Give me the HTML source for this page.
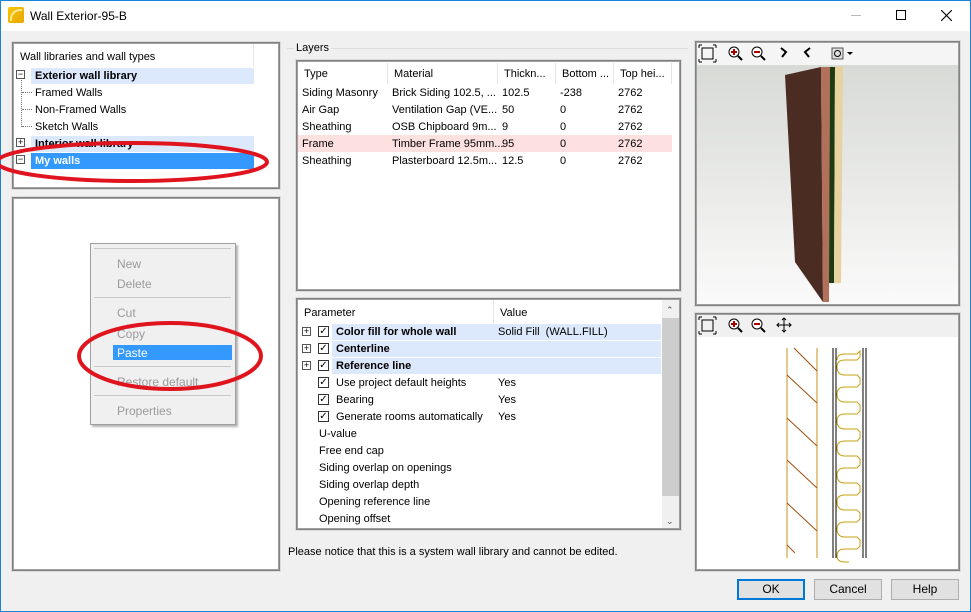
<!DOCTYPE html>
<html><head><meta charset="utf-8"><style>
*{margin:0;padding:0;box-sizing:border-box}
body{width:971px;height:612px;overflow:hidden;background:#f0f0f0;font-family:"Liberation Sans",sans-serif;font-size:11px;color:#000;position:relative}
.a{position:absolute}
.t{position:absolute;white-space:nowrap;line-height:13px;margin-top:1px}
.box{position:absolute;background:#fff;border:1px solid #828282;box-shadow:0 0 0 1px #dcdcdc, inset 0 0 0 1px #a0a0a0}
.b{font-weight:bold}
.hb{position:absolute;background:#dce8fb}
.cb{position:absolute;width:11px;height:11px;border:1px solid #333;background:#fff;font-size:10px;line-height:9px;text-align:center}
.pm{position:absolute;width:9px;height:9px;border:1px solid #555;background:#fff;font-size:9px;line-height:7px;text-align:center}
.btn{position:absolute;height:21px;width:68px;border:1px solid #adadad;background:#e1e1e1;text-align:center;line-height:19px;font-size:12px}
.mi{position:absolute;left:117px;color:#9a9a9a;font-size:12px}
.sep{position:absolute;left:94px;width:137px;height:1px;background:#c8c8c8}
.vd{position:absolute;width:1px;background:#e5e5e5}
</style></head><body>
<div class="a" style="left:0;top:0;width:971px;height:31px;background:#fff"></div>
<div class="a" style="left:0;top:0;width:1px;height:612px;background:#1883d7"></div>
<div class="a" style="left:970px;top:0;width:1px;height:612px;background:#1883d7"></div>
<div class="a" style="left:0;top:0;width:971px;height:1px;background:#1883d7"></div>
<div class="a" style="left:0;top:611px;width:971px;height:1px;background:#1883d7"></div>
<div class="a" style="left:8px;top:7px;width:16px;height:16px;background:linear-gradient(135deg,#f7c400,#e8a800);border-radius:2px"></div>
<div class="a" style="left:10px;top:9px;width:12px;height:12px;border-top:2px solid #fff6c0;border-left:2px solid #fff6c0;border-radius:10px 0 0 0;opacity:.8"></div>
<div class="t" style="left:30px;top:8px;font-size:12px;line-height:14px">Wall Exterior-95-B</div>
<div class="a" style="left:851px;top:15px;width:10px;height:1px;background:#bbb"></div>
<div class="a" style="left:896px;top:10px;width:10px;height:10px;border:1px solid #000"></div>
<svg class="a" style="left:941px;top:10px" width="11" height="11"><path d="M0 0L11 11M11 0L0 11" stroke="#000" stroke-width="1.1"/></svg>

<div class="box" style="left:12px;top:42px;width:268px;height:147px"></div>
<div class="vd" style="left:253px;top:44px;height:22px"></div>
<div class="t" style="left:20px;top:50px">Wall libraries and wall types</div>
<div class="hb" style="left:31px;top:68px;width:223px;height:16px"></div>
<div class="pm" style="left:16px;top:70px">−</div>
<div class="t b" style="left:35px;top:69px">Exterior wall library</div>
<div class="a" style="left:21px;top:80px;width:1px;height:47px;border-left:1px dotted #777"></div>
<div class="a" style="left:22px;top:92px;width:10px;border-top:1px dotted #777"></div>
<div class="a" style="left:22px;top:109px;width:10px;border-top:1px dotted #777"></div>
<div class="a" style="left:22px;top:126px;width:10px;border-top:1px dotted #777"></div>
<div class="t" style="left:35px;top:86px">Framed Walls</div>
<div class="t" style="left:35px;top:103px">Non-Framed Walls</div>
<div class="t" style="left:35px;top:120px">Sketch Walls</div>
<div class="hb" style="left:31px;top:136px;width:223px;height:16px"></div>
<div class="pm" style="left:16px;top:138px">+</div>
<div class="t b" style="left:35px;top:137px">Interior wall library</div>
<div class="a" style="left:31px;top:153px;width:223px;height:16px;background:#3399ff"></div>
<div class="pm" style="left:16px;top:155px">−</div>
<div class="t b" style="left:35px;top:154px;color:#fff">My walls</div>

<div class="box" style="left:12px;top:197px;width:268px;height:374px"></div>
<div class="a" style="left:90px;top:243px;width:146px;height:182px;background:#f0f0f0;border:1px solid #a0a0a0;box-shadow:2px 2px 2px rgba(0,0,0,.3)"></div>
<div class="sep" style="top:248px"></div>
<div class="mi t" style="top:257px">New</div>
<div class="mi t" style="top:277px">Delete</div>
<div class="sep" style="top:297px"></div>
<div class="mi t" style="top:306px">Cut</div>
<div class="mi t" style="top:327px">Copy</div>
<div class="a" style="left:113px;top:345px;width:119px;height:15px;background:#3399ff"></div>
<div class="mi t" style="top:346px;color:#fff">Paste</div>
<div class="sep" style="top:366px"></div>
<div class="mi t" style="top:375px">Restore default</div>
<div class="sep" style="top:395px"></div>
<div class="mi t" style="top:404px">Properties</div>

<div class="a" style="left:287px;top:48px;width:401px;height:1px;background:#dcdcdc"></div>
<div class="t" style="left:294px;top:41px;background:#f0f0f0;padding:0 2px 0 2px">Layers</div>
<div class="box" style="left:296px;top:60px;width:385px;height:231px"></div>
<div class="vd" style="left:387px;top:63px;height:21px"></div>
<div class="vd" style="left:497px;top:63px;height:21px"></div>
<div class="vd" style="left:555px;top:63px;height:21px"></div>
<div class="vd" style="left:613px;top:63px;height:21px"></div>
<div class="vd" style="left:671px;top:63px;height:21px"></div>
<div class="t" style="left:304px;top:67px">Type</div>
<div class="t" style="left:394px;top:67px">Material</div>
<div class="t" style="left:504px;top:67px">Thickn...</div>
<div class="t" style="left:562px;top:67px">Bottom ...</div>
<div class="t" style="left:620px;top:67px">Top hei...</div>
<div class="a" style="left:298px;top:135px;width:374px;height:17px;background:#fde0e0"></div>
<div class="t" style="left:302px;top:86px">Siding Masonry</div><div class="t" style="left:392px;top:86px">Brick Siding 102.5, ...</div><div class="t" style="left:502px;top:86px">102.5</div><div class="t" style="left:560px;top:86px">-238</div><div class="t" style="left:618px;top:86px">2762</div>
<div class="t" style="left:302px;top:103px">Air Gap</div><div class="t" style="left:392px;top:103px">Ventilation Gap (VE...</div><div class="t" style="left:502px;top:103px">50</div><div class="t" style="left:560px;top:103px">0</div><div class="t" style="left:618px;top:103px">2762</div>
<div class="t" style="left:302px;top:120px">Sheathing</div><div class="t" style="left:392px;top:120px">OSB Chipboard 9m...</div><div class="t" style="left:502px;top:120px">9</div><div class="t" style="left:560px;top:120px">0</div><div class="t" style="left:618px;top:120px">2762</div>
<div class="t" style="left:302px;top:137px">Frame</div><div class="t" style="left:392px;top:137px">Timber Frame 95mm...</div><div class="t" style="left:502px;top:137px">95</div><div class="t" style="left:560px;top:137px">0</div><div class="t" style="left:618px;top:137px">2762</div>
<div class="t" style="left:302px;top:154px">Sheathing</div><div class="t" style="left:392px;top:154px">Plasterboard 12.5m...</div><div class="t" style="left:502px;top:154px">12.5</div><div class="t" style="left:560px;top:154px">0</div><div class="t" style="left:618px;top:154px">2762</div>

<div class="box" style="left:296px;top:298px;width:385px;height:232px"></div>
<div class="vd" style="left:493px;top:300px;height:23px"></div>
<div class="t" style="left:304px;top:306px">Parameter</div>
<div class="t" style="left:500px;top:306px">Value</div>
<div class="a" style="left:662px;top:300px;width:17px;height:228px;background:#f0f0f0"></div>
<div class="a" style="left:662px;top:318px;width:17px;height:178px;background:#cdcdcd"></div>
<div class="t" style="left:666px;top:303px;font-size:9px;color:#555">&#8963;</div>
<div class="t" style="left:666px;top:514px;font-size:9px;color:#555">&#8964;</div>
<div class="hb" style="left:332px;top:324px;width:329px;height:16px"></div>
<div class="hb" style="left:332px;top:341px;width:329px;height:16px"></div>
<div class="hb" style="left:332px;top:358px;width:329px;height:16px"></div>
<div class="pm" style="left:302px;top:327px">+</div><div class="pm" style="left:302px;top:344px">+</div><div class="pm" style="left:302px;top:361px">+</div>
<div class="cb" style="left:318px;top:326px">✓</div><div class="cb" style="left:318px;top:343px">✓</div><div class="cb" style="left:318px;top:360px">✓</div>
<div class="cb" style="left:318px;top:377px">✓</div><div class="cb" style="left:318px;top:394px">✓</div><div class="cb" style="left:318px;top:411px">✓</div>
<div class="t b" style="left:336px;top:325px">Color fill for whole wall</div><div class="t" style="left:498px;top:325px">Solid Fill&nbsp; (WALL.FILL)</div>
<div class="t b" style="left:336px;top:342px">Centerline</div>
<div class="t b" style="left:336px;top:359px">Reference line</div>
<div class="t" style="left:336px;top:376px">Use project default heights</div><div class="t" style="left:498px;top:376px">Yes</div>
<div class="t" style="left:336px;top:393px">Bearing</div><div class="t" style="left:498px;top:393px">Yes</div>
<div class="t" style="left:336px;top:410px">Generate rooms automatically</div><div class="t" style="left:498px;top:410px">Yes</div>
<div class="t" style="left:319px;top:427px">U-value</div>
<div class="t" style="left:319px;top:444px">Free end cap</div>
<div class="t" style="left:319px;top:461px">Siding overlap on openings</div>
<div class="t" style="left:319px;top:478px">Siding overlap depth</div>
<div class="t" style="left:319px;top:495px">Opening reference line</div>
<div class="t" style="left:319px;top:512px">Opening offset</div>
<div class="t" style="left:288px;top:545px">Please notice that this is a system wall library and cannot be edited.</div>

<div class="box" style="left:695px;top:41px;width:265px;height:265px"></div>
<div class="a" style="left:697px;top:43px;width:261px;height:22px;background:#f5f5f5"></div>
<div class="a" style="left:697px;top:65px;width:261px;height:239px;background:linear-gradient(#d8dad6,#fafafa)"></div>
<svg class="a" style="left:697px;top:43px" width="160" height="22">
<rect x="5" y="5" width="11" height="11" fill="none" stroke="#000"/><path d="M2 2h3M2 2v3M19 2h-3M19 2v3M2 19h3M2 19v-3M19 19h-3M19 19v-3" stroke="#000"/>
<circle cx="37" cy="9" r="5" fill="#fff" stroke="#000"/><path d="M34 9h6M37 6v6" stroke="#a00" stroke-width="2"/><path d="M41 13l4 4" stroke="#000" stroke-width="2"/>
<circle cx="60" cy="9" r="5" fill="#fff" stroke="#000"/><path d="M57 9h6" stroke="#a00" stroke-width="2"/><path d="M64 13l4 4" stroke="#000" stroke-width="2"/>
<path d="M84 5l5 4-4 5" fill="none" stroke="#000" stroke-width="2"/><path d="M113 5l-5 4 4 5" fill="none" stroke="#000" stroke-width="2"/>
<rect x="135" y="5" width="11" height="11" fill="#ddd" stroke="#555"/><circle cx="140.5" cy="10.5" r="3" fill="none" stroke="#000"/>
<path d="M150 9h6l-3 3z" fill="#000"/></svg>
<svg class="a" style="left:697px;top:65px" width="261" height="239">
<polygon points="88,10 124,2 126,237 98,197" fill="#4a2c22"/>
<polygon points="124,2 133,2 132,237 126,237" fill="#b0705a"/>
<polygon points="133,2 138,2 137,218 132,218" fill="#1e3a10"/>
<polygon points="138,2 146,1 144,218 137,218" fill="#e8d2a0"/>
</svg>

<div class="box" style="left:695px;top:313px;width:265px;height:258px"></div>
<div class="a" style="left:697px;top:315px;width:261px;height:22px;background:#f0f0f0"></div>
<svg class="a" style="left:697px;top:315px" width="110" height="22">
<rect x="5" y="5" width="11" height="11" fill="none" stroke="#000"/><path d="M2 2h3M2 2v3M19 2h-3M19 2v3M2 19h3M2 19v-3M19 19h-3M19 19v-3" stroke="#000"/>
<circle cx="37" cy="9" r="5" fill="#fff" stroke="#000"/><path d="M34 9h6M37 6v6" stroke="#a00" stroke-width="2"/><path d="M41 13l4 4" stroke="#000" stroke-width="2"/>
<circle cx="60" cy="9" r="5" fill="#fff" stroke="#000"/><path d="M57 9h6" stroke="#a00" stroke-width="2"/><path d="M64 13l4 4" stroke="#000" stroke-width="2"/>
<path d="M87 3v14M80 10h14M85 5l2-2 2 2M85 15l2 2 2-2M82 8l-2 2 2 2M92 8l2 2-2 2" fill="none" stroke="#000"/></svg>
<svg class="a" style="left:697px;top:338px" width="261" height="230">
<path d="M90 10v210M120 10v210" stroke="#c89020"/>
<path d="M97 10l23 23M90 37l30 28M90 80l30 28M90 122l30 28M90 165l30 28M90 207l8 8" stroke="#a05010"/>
<path d="M136 10v210M139 10v210M166 10v210M169 10v210" stroke="#000"/>
<path d="M140 22q0 -6 8 -6h12l3 -3v6l-3 3h-12q-8 0-8 7q0 8 8 8h12l3 3v6l-3 3h-12q-8 0-8 7q0 8 8 8h12l3 3v6l-3 3h-12q-8 0-8 7q0 8 8 8h12l3 3v6l-3 3h-12q-8 0-8 7q0 8 8 8h12l3 3v6l-3 3h-12q-8 0-8 7q0 8 8 8h12l3 3v6l-3 3h-12q-8 0-8 7q0 8 8 8h12l3 3v6l-3 3h-12q-8 0-8 7q0 8 8 8h12l3 3v6l-3 3h-12q-8 0-8 7q0 6 8 6h4" fill="none" stroke="#c8a010"/>
</svg>

<div class="btn" style="left:737px;top:579px;border:2px solid #0078d7;line-height:17px">OK</div>
<div class="btn" style="left:814px;top:579px">Cancel</div>
<div class="btn" style="left:891px;top:579px">Help</div>

<svg class="a" style="left:0;top:0" width="300" height="420">
<ellipse cx="132" cy="162" rx="135" ry="19" fill="none" stroke="#e0141e" stroke-width="4"/>
<ellipse cx="170" cy="356" rx="91" ry="33" fill="none" stroke="#e0141e" stroke-width="4"/>
</svg>
</body></html>
